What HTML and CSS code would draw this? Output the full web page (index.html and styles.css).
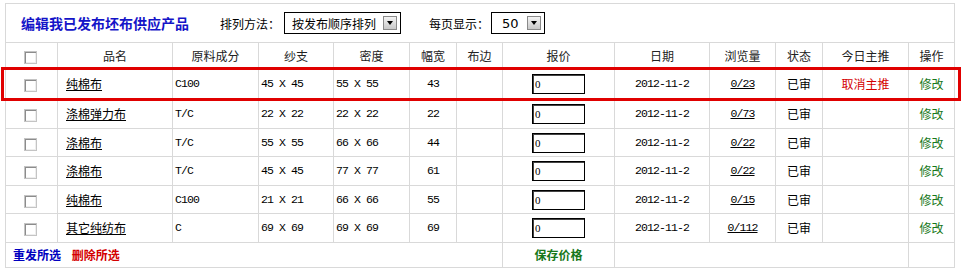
FILE: index.html
```html
<!DOCTYPE html>
<html lang="zh-CN">
<head>
  <meta charset="UTF-8" />
  <title>编辑我已发布坯布供应产品</title>
  <link rel="stylesheet" href="styles.css">
</head>
<body>
  <div class="page">
    <table class="list">
      <colgroup>
        <col class="w-check"><col class="w-name"><col class="w-mat"><col class="w-yarn"><col class="w-dens">
        <col class="w-width"><col class="w-edge"><col class="w-price"><col class="w-date"><col class="w-views">
        <col class="w-state"><col class="w-push"><col class="w-op">
      </colgroup>
      <tr class="bar">
        <td colspan="13">
          <div class="bar-inner">
            <span class="title">编辑我已发布坯布供应产品</span>
            <span class="label">排列方法：</span>
            <span class="select wide">
              <select><option>按发布顺序排列</option><option>按浏览量排列</option></select>
              <span class="arrow"></span>
            </span>
            <span class="label gap">每页显示：</span>
            <span class="select narrow">
              <select><option>50</option><option>20</option></select>
              <span class="arrow"></span>
            </span>
          </div>
        </td>
      </tr>
      <tr class="head">
        <th><input type="checkbox" class="check"></th>
        <th>品名</th><th>原料成分</th><th>纱支</th><th>密度</th><th>幅宽</th><th>布边</th>
        <th>报价</th><th>日期</th><th>浏览量</th><th>状态</th><th>今日主推</th><th>操作</th>
      </tr>
      <tr class="row first">
        <td class="c"><input type="checkbox" class="check"></td>
        <td class="name"><a href="#">纯棉布</a></td>
        <td class="mono">C100</td><td class="mono">45 X 45</td><td class="mono">55 X 55</td>
        <td class="mono c">43</td><td></td>
        <td class="c"><input type="text" class="price" value="0"></td>
        <td class="mono c">2012-11-2</td><td class="mono c"><a href="#">0/23</a></td>
        <td class="c">已审</td><td class="c"><a href="#" class="red">取消主推</a></td>
        <td class="c"><a href="#" class="green">修改</a></td>
      </tr>
      <tr class="row">
        <td class="c"><input type="checkbox" class="check"></td>
        <td class="name"><a href="#">涤棉弹力布</a></td>
        <td class="mono">T/C</td><td class="mono">22 X 22</td><td class="mono">22 X 22</td>
        <td class="mono c">22</td><td></td>
        <td class="c"><input type="text" class="price" value="0"></td>
        <td class="mono c">2012-11-2</td><td class="mono c"><a href="#">0/73</a></td>
        <td class="c">已审</td><td></td>
        <td class="c"><a href="#" class="green">修改</a></td>
      </tr>
      <tr class="row">
        <td class="c"><input type="checkbox" class="check"></td>
        <td class="name"><a href="#">涤棉布</a></td>
        <td class="mono">T/C</td><td class="mono">55 X 55</td><td class="mono">66 X 66</td>
        <td class="mono c">44</td><td></td>
        <td class="c"><input type="text" class="price" value="0"></td>
        <td class="mono c">2012-11-2</td><td class="mono c"><a href="#">0/22</a></td>
        <td class="c">已审</td><td></td>
        <td class="c"><a href="#" class="green">修改</a></td>
      </tr>
      <tr class="row">
        <td class="c"><input type="checkbox" class="check"></td>
        <td class="name"><a href="#">涤棉布</a></td>
        <td class="mono">T/C</td><td class="mono">45 X 45</td><td class="mono">77 X 77</td>
        <td class="mono c">61</td><td></td>
        <td class="c"><input type="text" class="price" value="0"></td>
        <td class="mono c">2012-11-2</td><td class="mono c"><a href="#">0/22</a></td>
        <td class="c">已审</td><td></td>
        <td class="c"><a href="#" class="green">修改</a></td>
      </tr>
      <tr class="row">
        <td class="c"><input type="checkbox" class="check"></td>
        <td class="name"><a href="#">纯棉布</a></td>
        <td class="mono">C100</td><td class="mono">21 X 21</td><td class="mono">66 X 66</td>
        <td class="mono c">55</td><td></td>
        <td class="c"><input type="text" class="price" value="0"></td>
        <td class="mono c">2012-11-2</td><td class="mono c"><a href="#">0/15</a></td>
        <td class="c">已审</td><td></td>
        <td class="c"><a href="#" class="green">修改</a></td>
      </tr>
      <tr class="row">
        <td class="c"><input type="checkbox" class="check"></td>
        <td class="name"><a href="#">其它纯纺布</a></td>
        <td class="mono">C</td><td class="mono">69 X 69</td><td class="mono">69 X 69</td>
        <td class="mono c">69</td><td></td>
        <td class="c"><input type="text" class="price" value="0"></td>
        <td class="mono c">2012-11-2</td><td class="mono c"><a href="#">0/112</a></td>
        <td class="c">已审</td><td></td>
        <td class="c"><a href="#" class="green">修改</a></td>
      </tr>
      <tr class="foot">
        <td colspan="7" class="actions">
          <a href="#" class="blue">重发所选</a>
          <a href="#" class="red">删除所选</a>
        </td>
        <td class="c"><a href="#" class="green">保存价格</a></td>
        <td colspan="4"></td>
        <td></td>
      </tr>
    </table>
    <!-- highlight box drawn over the first row -->
    <div class="mark"></div>
  </div>
</body>
</html>
```

FILE: styles.css
```css
body {
  margin: 0;
  background: #fff;
  font-family: "Noto Sans CJK SC", sans-serif;
  font-size: 12px;
  color: #000;
}
.page {
  position: relative;
  padding: 3px 0 0 5px;
}
.list {
  border-collapse: collapse;
  table-layout: fixed;
  width: 950px;
}
.list td, .list th {
  border: 1px solid #d9d9d9;
  padding: 0 2px;
  font-weight: normal;
  white-space: nowrap;
  overflow: hidden;
}
.w-check { width: 52px; }
.w-name { width: 115px; }
.w-mat { width: 86px; }
.w-yarn { width: 75px; }
.w-dens { width: 76px; }
.w-width { width: 47px; }
.w-edge { width: 46px; }
.w-price { width: 112px; }
.w-date { width: 95px; }
.w-views { width: 66px; }
.w-state { width: 47px; }
.w-push { width: 86px; }
.w-op { width: 46px; }

/* title bar */
.list .bar td {
  height: 38px;
  padding: 0;
}
.bar-inner {
  display: flex;
  align-items: center;
  padding-left: 15px;
}
.title {
  color: #1414c8;
  font-size: 14px;
  font-weight: bold;
  margin-right: 31px;
}
.label {
  margin-right: 4px;
}
.label.gap {
  margin-left: 28px;
  margin-right: 2px;
}
.select {
  position: relative;
  display: inline-block;
}
.select select {
  appearance: none;
  -webkit-appearance: none;
  height: 22px;
  border: 1px solid #000;
  border-radius: 0;
  background: #fff;
  font-family: "Noto Sans CJK SC", sans-serif;
  font-size: 12px;
  color: #000;
  padding: 0 0 0 7px;
  outline: none;
}
.select.wide select { width: 117px; }
.select.narrow select { width: 54px; padding-left: 10px; font-family: "DejaVu Sans", sans-serif; font-size: 13px; }
.arrow {
  position: absolute;
  top: 4px;
  right: 4px;
  width: 12px;
  height: 12px;
  border: 1px solid #8a8a8a;
  background: linear-gradient(#f4f4f4, #c8c8c8);
  pointer-events: none;
}
.arrow::after {
  content: "";
  position: absolute;
  left: 3px;
  top: 4px;
  border-left: 3px solid transparent;
  border-right: 3px solid transparent;
  border-top: 4px solid #000;
}

/* header and rows */
.head th {
  height: 24px;
  text-align: center;
  color: #222;
}
.row td {
  height: 27.5px;
}
.row.first td {
  height: 31px;
}
.c { text-align: center; }
.list td.name { padding-left: 8px; }
.mono {
  font-family: "Liberation Mono", monospace;
  font-size: 11.5px;
  letter-spacing: -0.9px;
}
.list a {
  color: #000;
}
.list a.red { color: #d40000; text-decoration: none; }
.list a.green { color: #17781a; text-decoration: none; }
.list a.blue { color: #0000c0; text-decoration: none; }
.check {
  appearance: none;
  -webkit-appearance: none;
  width: 13px;
  height: 13px;
  margin: 0 2px 0 0;
  vertical-align: middle;
  border: 1px solid #c4c4c4;
  background: #fff;
  box-shadow: inset 1px 1px 0 #8c8c8c, inset -1px -1px 0 #eee;
}
.price {
  width: 53px;
  height: 20px;
  box-sizing: border-box;
  border: 1px solid #000;
  box-shadow: inset 1px 1px 0 #444;
  padding: 0 2px;
  font-family: "Liberation Serif", serif;
  font-size: 11px;
  vertical-align: middle;
}

/* footer */
.list .foot td {
  height: 24px;
}
.foot a {
  font-weight: bold;
}
.list td.actions {
  padding-left: 7px;
}
.actions a {
  margin-right: 8px;
}

.mark {
  position: absolute;
  left: 1px;
  top: 67px;
  width: 954px;
  height: 28px;
  border: 3px solid #e00000;
}
```
